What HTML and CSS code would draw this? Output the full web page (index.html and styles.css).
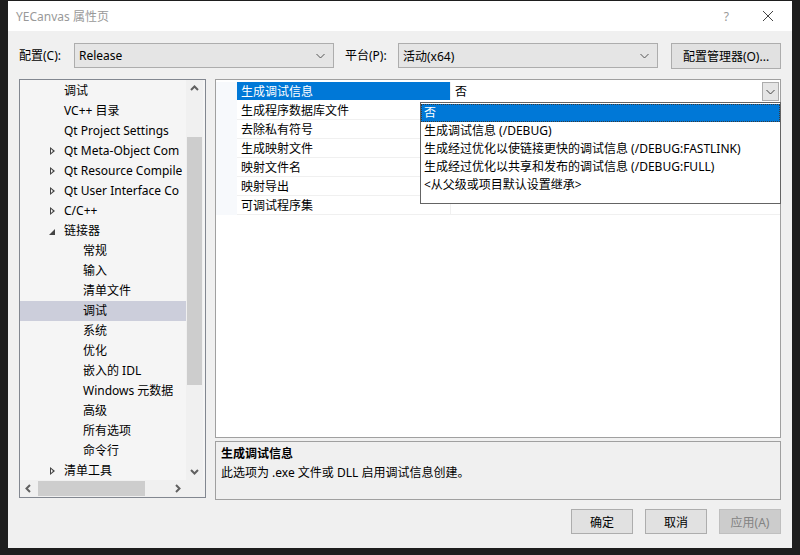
FILE: index.html
```html
<!DOCTYPE html>
<html lang="zh-CN">
<head>
    <meta charset="UTF-8">
    <title>YECanvas 属性页</title>
    <link rel="stylesheet" href="styles.css">
</head>
<body>
    <div class="window">
        <div class="titlebar">
            <span class="title">YECanvas 属性页</span>
            <span class="help">?</span>
            <svg class="close" width="12" height="12" viewBox="0 0 12 12"><path d="M1 1 L11 11 M11 1 L1 11" stroke="#444" stroke-width="1" fill="none"/></svg>
        </div>

        <div class="config-row">
            <label class="lbl">配置(C):</label>
            <div class="select sel-config"><span>Release</span><svg width="9" height="6" viewBox="0 0 9 6"><path d="M0.5 1 L4.5 5 L8.5 1" stroke="#555" fill="none"/></svg></div>
            <label class="lbl lbl-platform">平台(P):</label>
            <div class="select sel-platform"><span>活动(x64)</span><svg width="9" height="6" viewBox="0 0 9 6"><path d="M0.5 1 L4.5 5 L8.5 1" stroke="#555" fill="none"/></svg></div>
            <button class="btn btn-manager">配置管理器(O)...</button>
        </div>

        <div class="main">
            <div class="tree">
                <div class="tree-body">
                    <ul class="tree-list">
                        <li class="l1">调试</li>
                        <li class="l1">VC++ 目录</li>
                        <li class="l1">Qt Project Settings</li>
                        <li class="l1 closed">Qt Meta-Object Com</li>
                        <li class="l1 closed">Qt Resource Compile</li>
                        <li class="l1 closed">Qt User Interface Co</li>
                        <li class="l1 closed">C/C++</li>
                        <li class="l1 open">链接器</li>
                        <li class="l2">常规</li>
                        <li class="l2">输入</li>
                        <li class="l2">清单文件</li>
                        <li class="l2 selected">调试</li>
                        <li class="l2">系统</li>
                        <li class="l2">优化</li>
                        <li class="l2">嵌入的 IDL</li>
                        <li class="l2">Windows 元数据</li>
                        <li class="l2">高级</li>
                        <li class="l2">所有选项</li>
                        <li class="l2">命令行</li>
                        <li class="l1 closed">清单工具</li>
                    </ul>
                    <div class="vscroll">
                        <svg class="arrow" width="17" height="17" viewBox="0 0 17 17"><path d="M5 10 L8.5 6.5 L12 10" stroke="#606060" stroke-width="2" fill="none"/></svg>
                        <div class="vtrack"><div class="vthumb"></div></div>
                        <svg class="arrow" width="17" height="17" viewBox="0 0 17 17"><path d="M5 7 L8.5 10.5 L12 7" stroke="#606060" stroke-width="2" fill="none"/></svg>
                    </div>
                </div>
                <div class="hscroll">
                    <svg class="arrow" width="17" height="17" viewBox="0 0 17 17"><path d="M10 5 L6.5 8.5 L10 12" stroke="#606060" stroke-width="2" fill="none"/></svg>
                    <div class="htrack"><div class="hthumb"></div></div>
                    <svg class="arrow" width="17" height="17" viewBox="0 0 17 17"><path d="M7 5 L10.5 8.5 L7 12" stroke="#606060" stroke-width="2" fill="none"/></svg>
                    <div class="corner"></div>
                </div>
            </div>

            <div class="right">
                <div class="grid">
                    <div class="grid-rows">
                        <div class="row active">
                            <div class="name">生成调试信息</div>
                            <div class="value">否
                                <div class="dd-btn"><svg width="9" height="6" viewBox="0 0 9 6"><path d="M0.5 1 L4.5 5 L8.5 1" stroke="#444" fill="none"/></svg></div>
                            </div>
                        </div>
                        <div class="row"><div class="name">生成程序数据库文件</div><div class="value"></div></div>
                        <div class="row"><div class="name">去除私有符号</div><div class="value"></div></div>
                        <div class="row"><div class="name">生成映射文件</div><div class="value"></div></div>
                        <div class="row"><div class="name">映射文件名</div><div class="value"></div></div>
                        <div class="row"><div class="name">映射导出</div><div class="value"></div></div>
                        <div class="row"><div class="name">可调试程序集</div><div class="value"></div></div>
                    </div>
                    <ul class="dropdown">
                        <li class="picked">否</li>
                        <li>生成调试信息 (/DEBUG)</li>
                        <li>生成经过优化以使链接更快的调试信息 (/DEBUG:FASTLINK)</li>
                        <li>生成经过优化以共享和发布的调试信息 (/DEBUG:FULL)</li>
                        <li>&lt;从父级或项目默认设置继承&gt;</li>
                    </ul>
                </div>
                <div class="desc">
                    <div class="desc-title">生成调试信息</div>
                    <div class="desc-text">此选项为 .exe 文件或 DLL 启用调试信息创建。</div>
                </div>
            </div>
        </div>

        <div class="footer">
            <button class="btn">确定</button>
            <button class="btn">取消</button>
            <button class="btn disabled">应用(A)</button>
        </div>
    </div>
</body>
</html>
```

FILE: styles.css
```css
body {
    margin: 0;
    background-color: #1e1e1e;
    font-family: "Noto Sans", "Noto Sans CJK SC", sans-serif;
    font-size: 12px;
    color: #000;
}
.window {
    width: 784px;
    height: 547px;
    margin-left: 8px;
    margin-top: 1px;
    background-color: #f0f0f0;
}
.titlebar {
    height: 30px;
    background-color: #fff;
    display: flex;
    align-items: center;
    padding-left: 8px;
    padding-right: 18px;
}
.title {
    color: #999;
    font-size: 12px;
    flex: 1;
}
.help {
    color: #999;
    font-size: 12px;
    margin-right: 33px;
}

.config-row {
    display: flex;
    align-items: center;
    height: 25px;
    margin-top: 12px;
    padding-left: 11px;
}
.lbl { width: 55px; line-height: 20px; }
.lbl-platform { width: 53px; margin-left: 11px; }
.select {
    box-sizing: border-box;
    height: 25px;
    background-color: #e5e5e5;
    border: 1px solid #adadad;
    display: flex;
    align-items: center;
    justify-content: space-between;
    padding: 0 8px 0 4px;
}
.sel-config { width: 260px; }
.sel-platform { width: 260px; }

.btn {
    box-sizing: border-box;
    width: 62px;
    height: 25px;
    background-color: #e1e1e1;
    border: 1px solid #adadad;
    font-family: inherit;
    font-size: 12px;
    padding: 0;
    color: #000;
}
.btn-manager { width: 110px; margin-left: 13px; height: 26px; }
.btn.disabled { background-color: #cccccc; border-color: #bfbfbf; color: #838383; }

.main {
    display: flex;
    margin-top: 11px;
    padding-left: 11px;
    height: 421px;
}
.tree {
    box-sizing: border-box;
    width: 187px;
    height: 419px;
    border: 1px solid #828790;
    background-color: #f5f5f5;
    display: flex;
    flex-direction: column;
}
.tree-body {
    display: flex;
    flex: 1;
    overflow: hidden;
}
.tree-list {
    list-style: none;
    margin: 0;
    padding: 1px 0 0 0;
    width: 166px;
    overflow: hidden;
}
.tree-list li {
    height: 20px;
    line-height: 20px;
    white-space: nowrap;
    overflow: hidden;
    position: relative;
}
.tree-list .l1 { padding-left: 44px; }
.tree-list .l2 { padding-left: 63px; }
.tree-list .selected { background-color: #cccedb; }
.tree-list .closed::before {
    content: "";
    position: absolute;
    left: 30px;
    top: 6px;
    width: 0;
    height: 0;
    border-top: 4px solid transparent;
    border-bottom: 4px solid transparent;
    border-left: 5px solid #444;
}
.tree-list .closed::after {
    content: "";
    position: absolute;
    left: 31px;
    top: 8px;
    border-top: 2px solid transparent;
    border-bottom: 2px solid transparent;
    border-left: 2px solid #f5f5f5;
}
.tree-list .open::before {
    content: "";
    position: absolute;
    left: 29px;
    top: 8px;
    border-left: 6px solid transparent;
    border-bottom: 6px solid #444;
}
.vscroll {
    width: 17px;
    background-color: #f0f0f0;
    display: flex;
    flex-direction: column;
}
.vtrack { flex: 1; padding: 40px 1px 0 1px; }
.vthumb { height: 248px; background-color: #cdcdcd; }
.arrow { display: block; flex: none; }
.hscroll {
    height: 17px;
    display: flex;
    background-color: #f0f0f0;
}
.htrack { width: 132px; padding: 1px 0; }
.hthumb { width: 107px; height: 15px; margin-left: 1px; background-color: #cdcdcd; }
.corner { width: 17px; margin-left: auto; background-color: #f0f0f0; }

.right {
    margin-left: 9px;
    width: 566px;
    display: flex;
    flex-direction: column;
}
.grid {
    box-sizing: border-box;
    height: 360px;
    border: 1px solid #a0a0a0;
    background-color: #fff;
    position: relative;
    padding-top: 2px;
}
.grid-rows {
    border-left: 21px solid #f7f9fc;
}
.row {
    display: flex;
    height: 19px;
    line-height: 18px;
    border-bottom: 1px solid #f0f0f0;
    box-sizing: border-box;
}
.row .name {
    width: 214px;
    padding: 1px 0 0 4px;
    box-sizing: border-box;
    border-right: 1px solid #f0f0f0;
}
.row .value {
    flex: 1;
    padding: 1px 0 0 4px;
    position: relative;
}
.row.active { border-bottom-color: #fff; }
.row.active .name { background-color: #0078d7; color: #fff; }
.dd-btn {
    position: absolute;
    right: 1px;
    top: 0;
    box-sizing: border-box;
    width: 17px;
    height: 19px;
    background-color: #e5e5e5;
    border: 1px solid #acacac;
    display: flex;
    align-items: center;
    justify-content: center;
}
.dropdown {
    position: absolute;
    left: 204px;
    top: 22px;
    width: 361px;
    height: 102px;
    box-sizing: border-box;
    margin: 0;
    padding: 1px 0 0 0;
    list-style: none;
    background-color: #fff;
    border: 1px solid #646464;
}
.dropdown li {
    height: 18px;
    line-height: 18px;
    padding-left: 3px;
    white-space: nowrap;
}
.dropdown li.picked {
    background-color: #0078d7;
    color: #fff;
    outline: 1px dotted #3a3a3a;
    outline-offset: -1px;
}
.desc {
    box-sizing: border-box;
    height: 59px;
    margin-top: 3px;
    border: 1px solid #a0a0a0;
    padding: 2px 5px;
    line-height: 19px;
}
.desc-title { font-weight: bold; }

.footer {
    display: flex;
    justify-content: flex-end;
    gap: 12px;
    padding-right: 11px;
    margin-top: 9px;
}
```
